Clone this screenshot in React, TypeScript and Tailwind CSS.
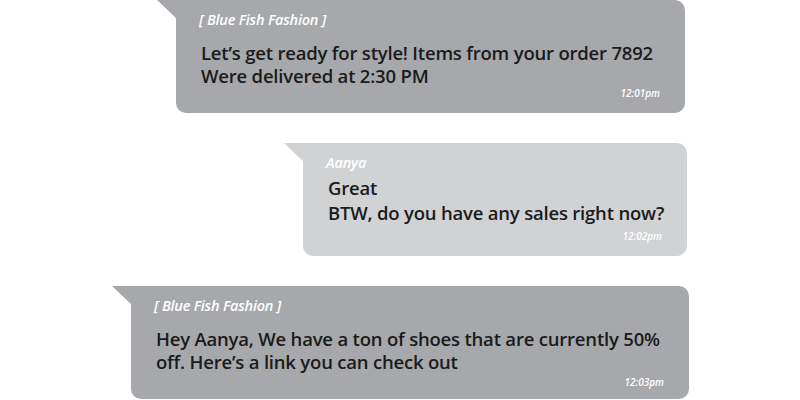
const messages = [
  {
    from: "[ Blue Fish Fashion ]",
    lines: ["Let’s get ready for style! Items from your order 7892", "Were delivered at 2:30 PM"],
    time: "12:01pm",
    offset: "ml-[176px] w-[509px] pb-[14px]",
    body: "mt-[13px] leading-[23px]",
    timeCls: "mt-0",
    bg: "bg-[#a7a8ab]",
    tail: "#a7a8ab",
  },
  {
    from: "Aanya",
    lines: ["Great", "BTW, do you have any sales right now?"],
    time: "12:02pm",
    offset: "ml-[303px] w-[384px] pb-[14px]",
    body: "mt-[4px] leading-[25px]",
    timeCls: "mt-[5px]",
    bg: "bg-[#d1d2d4]",
    tail: "#d1d2d4",
  },
  {
    from: "[ Blue Fish Fashion ]",
    lines: ["Hey Aanya, We have a ton of shoes that are currently 50%", "off. Here’s a link you can check out"],
    time: "12:03pm",
    offset: "ml-[131px] w-[558px] pb-[11px]",
    body: "mt-[13px] leading-[23px]",
    timeCls: "mt-[3px]",
    bg: "bg-[#a7a8ab]",
    tail: "#a7a8ab",
  },
];

export default function App() {
  return (
    <div className="w-[800px] h-[400px] bg-white overflow-hidden font-['Open_Sans',sans-serif]">
      <div className="flex flex-col gap-[30px]">
        {messages.map((m, i) => (
          <div key={i} className={`relative ${m.offset} ${m.bg} rounded-r-[10px] rounded-bl-[10px] pt-[12px] pl-[23px] pr-[25px]`}>
            <svg className="absolute -left-[19px] top-0" width="20" height="20" viewBox="0 0 20 20">
              <polygon points="0,0 20,0 20,19" fill={m.tail} />
            </svg>
            <div className="text-[14.5px] leading-[16px] italic font-semibold text-white tracking-[-0.2px]">{m.from}</div>
            <div className={`${m.body} pl-[2px] text-[18.5px] font-semibold text-[#1b1b1b] tracking-[-0.2px] whitespace-nowrap`}>
              {m.lines.map((l, j) => (
                <div key={j}>{l}</div>
              ))}
            </div>
            <div className={`${m.timeCls} text-right text-[10px] leading-[12px] italic font-semibold text-white`}>{m.time}</div>
          </div>
        ))}
      </div>
    </div>
  );
}
